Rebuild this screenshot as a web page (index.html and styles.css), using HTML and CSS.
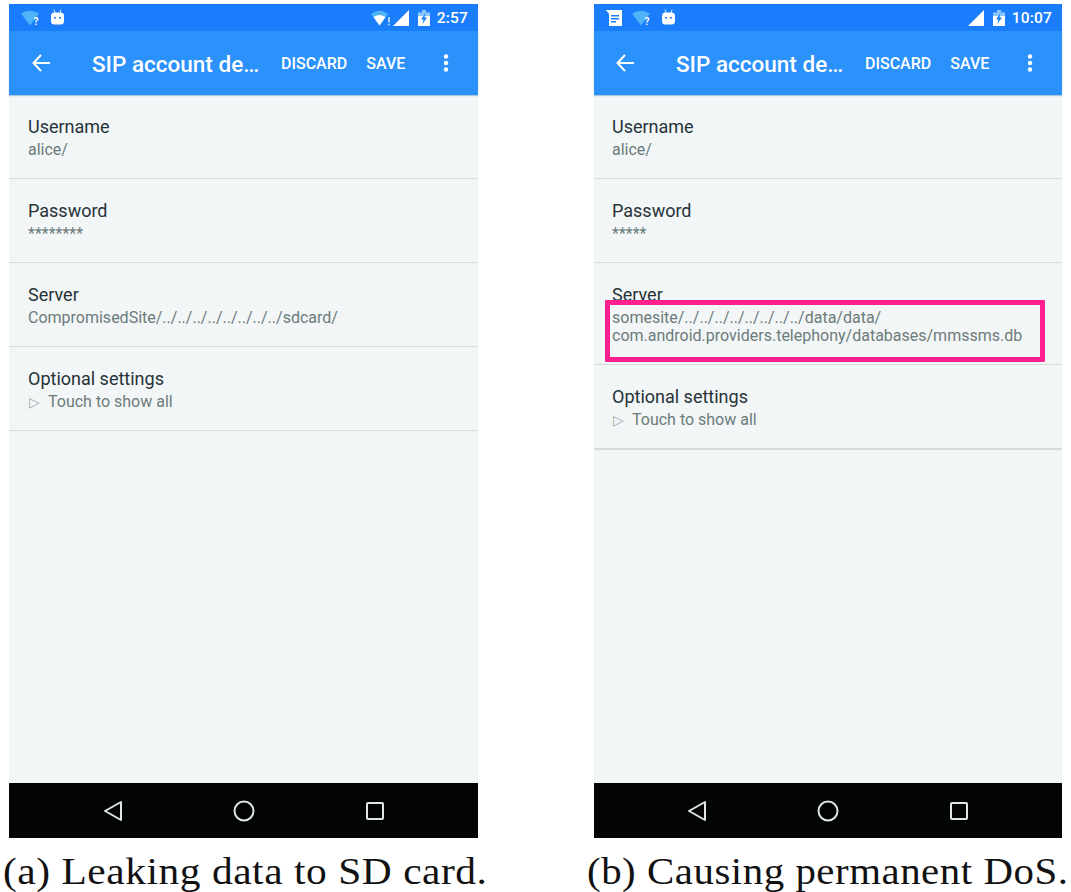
FILE: index.html
```html
<!DOCTYPE html>
<html lang="en">
<head>
  <meta charset="UTF-8">
  <title>SIP account details</title>
  <link rel="stylesheet" href="styles.css">
</head>
<body>
  <div class="figures">
    <div class="figure">
      <div class="phone">
        <div class="status-bar">
          <div class="status-left">
            <svg class="ico-wifi" viewBox="0 0 18 16"><path d="M0 3.500Q9-2 18 3.500L9 15.500Z" fill="#4fb3f8"/><text x="12.500" y="15" class="wifi-mark">?</text></svg>
            <svg class="ico-droid" viewBox="0 0 13 16"><path d="M3 0.500 4 4M10 0.500 9 4" stroke="#cfe8ff" fill="none"/><rect y="3.500" width="13" height="12" rx="3.500" fill="#fff"/><path d="M3 8h2v1.500H3zM8 8h2v1.500H8z" fill="#1a7efc"/></svg>
          </div>
          <div class="status-right">
            <svg class="ico-wifi-warn" viewBox="0 0 19 16"><path d="M0 4Q8.500-3 17 4L8.500 15.500Z" fill="#4fb3f8"/><path d="M2.500 7Q8.500 3 14.500 7L8.500 15.500Z" fill="#fff"/><path d="M17.200 7h1.500v5.500h-1.500zM17.200 13.800h1.500v1.500h-1.500z" fill="#dcefff"/></svg>
            <svg class="ico-signal" viewBox="0 0 16 16"><path d="M16 0V16H0Z" fill="#fff"/></svg>
            <svg class="ico-battery" viewBox="0 0 12 16"><path d="M4 0H8V2.500H12V6H0V2.500H4Z" fill="#8cc6fb"/><path d="M0 6H12V16H0Z" fill="#fff"/><path d="M7.500 3 3 9.500H5.500L4.500 14 9 7.500H6.500Z" fill="#1a7efc"/></svg>
            <span class="clock">2:57</span>
          </div>
        </div>
        <div class="toolbar">
          <svg class="ico-back" viewBox="0 0 18 18"><path d="M9 1 1.500 9 9 17M2 9H18" fill="none" stroke="#fff" stroke-width="2"/></svg>
          <div class="toolbar-title">SIP account de…</div>
          <div class="toolbar-action">DISCARD</div>
          <div class="toolbar-action">SAVE</div>
          <svg class="ico-more" viewBox="0 0 6 18"><circle cx="3" cy="2.500" r="2.200"/><circle cx="3" cy="9" r="2.200"/><circle cx="3" cy="15.500" r="2.200"/></svg>
        </div>
        <div class="settings">
          <div class="row">
            <div class="row-title">Username</div>
            <div class="row-sub">alice/</div>
          </div>
          <div class="row">
            <div class="row-title">Password</div>
            <div class="row-sub">********</div>
          </div>
          <div class="row">
            <div class="row-title">Server</div>
            <div class="row-sub">CompromisedSite/../../../../../../../../sdcard/</div>
          </div>
          <div class="row">
            <div class="row-title">Optional settings</div>
            <div class="row-sub"><span class="tri">▷</span>Touch to show all</div>
          </div>
        </div>
        <div class="nav-bar">
          <svg class="ico-nav" viewBox="0 0 24 24"><path d="M20 3V21L4 12Z" fill="none" stroke="#dfe6e6" stroke-width="2" stroke-linejoin="round"/></svg>
          <svg class="ico-nav" viewBox="0 0 24 24"><circle cx="12" cy="12" r="9.500" fill="none" stroke="#dfe6e6" stroke-width="2"/></svg>
          <svg class="ico-nav" viewBox="0 0 24 24"><rect x="4" y="4" width="16" height="16" rx="1" fill="none" stroke="#dfe6e6" stroke-width="2"/></svg>
        </div>
      </div>
      <div class="caption">(a) Leaking data to SD card.</div>
    </div>

    <div class="figure figure-b">
      <div class="phone">
        <div class="status-bar">
          <div class="status-left">
            <svg class="ico-doc" viewBox="0 0 16 16"><path d="M0 0H16V16H3V4Z" fill="#fff"/><path d="M5 5H13V6.500H5zM5 8H13V9.500H5zM5 11H10V12.500H5z" fill="#1a7efc"/></svg>
            <svg class="ico-wifi" viewBox="0 0 18 16"><path d="M0 3.500Q9-2 18 3.500L9 15.500Z" fill="#4fb3f8"/><text x="12.500" y="15" class="wifi-mark">?</text></svg>
            <svg class="ico-droid" viewBox="0 0 13 16"><path d="M3 0.500 4 4M10 0.500 9 4" stroke="#cfe8ff" fill="none"/><rect y="3.500" width="13" height="12" rx="3.500" fill="#fff"/><path d="M3 8h2v1.500H3zM8 8h2v1.500H8z" fill="#1a7efc"/></svg>
          </div>
          <div class="status-right">
            <svg class="ico-signal" viewBox="0 0 16 16"><path d="M16 0V16H0Z" fill="#fff"/></svg>
            <svg class="ico-battery" viewBox="0 0 12 16"><path d="M4 0H8V2.500H12V6H0V2.500H4Z" fill="#8cc6fb"/><path d="M0 6H12V16H0Z" fill="#fff"/><path d="M7.500 3 3 9.500H5.500L4.500 14 9 7.500H6.500Z" fill="#1a7efc"/></svg>
            <span class="clock">10:07</span>
          </div>
        </div>
        <div class="toolbar">
          <svg class="ico-back" viewBox="0 0 18 18"><path d="M9 1 1.500 9 9 17M2 9H18" fill="none" stroke="#fff" stroke-width="2"/></svg>
          <div class="toolbar-title">SIP account de…</div>
          <div class="toolbar-action">DISCARD</div>
          <div class="toolbar-action">SAVE</div>
          <svg class="ico-more" viewBox="0 0 6 18"><circle cx="3" cy="2.500" r="2.200"/><circle cx="3" cy="9" r="2.200"/><circle cx="3" cy="15.500" r="2.200"/></svg>
        </div>
        <div class="settings">
          <div class="row">
            <div class="row-title">Username</div>
            <div class="row-sub">alice/</div>
          </div>
          <div class="row">
            <div class="row-title">Password</div>
            <div class="row-sub">*****</div>
          </div>
          <div class="row">
            <div class="row-title">Server</div>
            <div class="row-sub">somesite/../../../../../../../../data/data/<br>com.android.providers.telephony/databases/mmssms.db</div>
            <div class="highlight"></div>
          </div>
          <div class="row row-last">
            <div class="row-title">Optional settings</div>
            <div class="row-sub"><span class="tri">▷</span>Touch to show all</div>
          </div>
        </div>
        <div class="nav-bar">
          <svg class="ico-nav" viewBox="0 0 24 24"><path d="M20 3V21L4 12Z" fill="none" stroke="#dfe6e6" stroke-width="2" stroke-linejoin="round"/></svg>
          <svg class="ico-nav" viewBox="0 0 24 24"><circle cx="12" cy="12" r="9.500" fill="none" stroke="#dfe6e6" stroke-width="2"/></svg>
          <svg class="ico-nav" viewBox="0 0 24 24"><rect x="4" y="4" width="16" height="16" rx="1" fill="none" stroke="#dfe6e6" stroke-width="2"/></svg>
        </div>
      </div>
      <div class="caption">(b) Causing permanent DoS.</div>
    </div>
  </div>
</body>
</html>
```

FILE: styles.css
```css
html, body {
  margin: 0;
  padding: 0;
  background: #fff;
}

body {
  font-family: Roboto, "Liberation Sans", sans-serif;
  overflow: hidden;
}

.figures {
  display: flex;
  gap: 116px;
  padding: 4px 0 0 9px;
}

.figure {
  width: 469px;
}

.figure-b {
  width: 468px;
}

.phone {
  display: flex;
  flex-direction: column;
  height: 834px;
  background: #f2f6f6;
}

.status-bar {
  display: flex;
  justify-content: space-between;
  align-items: center;
  flex: 0 0 27px;
  padding: 0 10px 0 12px;
  background: #1a7efc;
  color: #fff;
}

.status-left,
.status-right {
  display: flex;
  align-items: center;
}

.status-left svg,
.status-right svg {
  display: block;
}

.status-left {
  gap: 10px;
}

.ico-wifi { width: 18px; height: 16px; }
.ico-droid { width: 13px; height: 16px; margin-left: 2px; margin-top: -1px; }
.ico-doc { width: 16px; height: 16px; }
.ico-wifi-warn { width: 19px; height: 16px; margin-right: 3px; }
.ico-signal { width: 16px; height: 16px; margin-right: 9px; }
.ico-battery { width: 12px; height: 16px; margin-right: 7px; }

.wifi-mark {
  font-family: Roboto, sans-serif;
  font-size: 10px;
  font-weight: 700;
  fill: #fff;
}

.clock {
  font-size: 15.500px;
  font-weight: 500;
  letter-spacing: 0.2px;
}

.toolbar {
  display: flex;
  align-items: center;
  flex: 0 0 64px;
  padding-left: 23px;
  background: #2b91fb;
  box-shadow: 0 1px 1px #a9c9dd;
  color: #fff;
  position: relative;
}

.figure-b .toolbar {
  padding-left: 22px;
}

.ico-back {
  width: 18px;
  height: 18px;
  margin-right: 42px;
}

.toolbar-title {
  flex: 0 0 189px;
  margin-top: 2px;
  font-size: 22.500px;
  font-weight: 500;
  white-space: nowrap;
}

.toolbar-action {
  font-size: 16px;
  font-weight: 500;
  margin-right: 19px;
}

.ico-more {
  width: 6px;
  height: 18px;
  margin-left: 19px;
  fill: #fff;
}

.settings {
  flex: 1;
}

.row {
  position: relative;
  box-sizing: border-box;
  padding: 20px 18px 19px 19px;
  border-bottom: 1px solid #d3dedb;
}

.figure-b .row {
  padding-left: 18px;
}

.row-title {
  font-size: 18px;
  line-height: 24px;
  color: #263238;
}

.row-sub {
  margin-top: 2px;
  font-size: 16px;
  line-height: 18px;
  color: #6c7b7b;
  white-space: nowrap;
}

.row-last {
  border-bottom-width: 2px;
}

.tri {
  display: inline-block;
  width: 20px;
  font-family: "DejaVu Sans", sans-serif;
  font-size: 14px;
  line-height: 0;
  color: #a3aeae;
  text-indent: 1px;
}

.highlight {
  position: absolute;
  left: 11px;
  top: 37px;
  box-sizing: border-box;
  width: 440px;
  height: 62px;
  border: 5px solid #ff1f8f;
  border-radius: 1px;
}

.nav-bar {
  display: flex;
  justify-content: center;
  align-items: center;
  gap: 107px;
  flex: 0 0 55px;
  background: #030405;
}

.ico-nav {
  width: 24px;
  height: 24px;
}

/* the captions are set wider than Liberation Serif runs by default */
.caption {
  margin: 10px 0 0 -6px;
  font-family: "Liberation Serif", serif;
  font-size: 38px;
  letter-spacing: 0.500px;
  line-height: 46px;
  color: #111;
  white-space: nowrap;
  transform: scaleX(1.09);
  transform-origin: left center;
}

.figure-b .caption {
  margin-left: -7px;
  transform: scaleX(1.075);
}
```
